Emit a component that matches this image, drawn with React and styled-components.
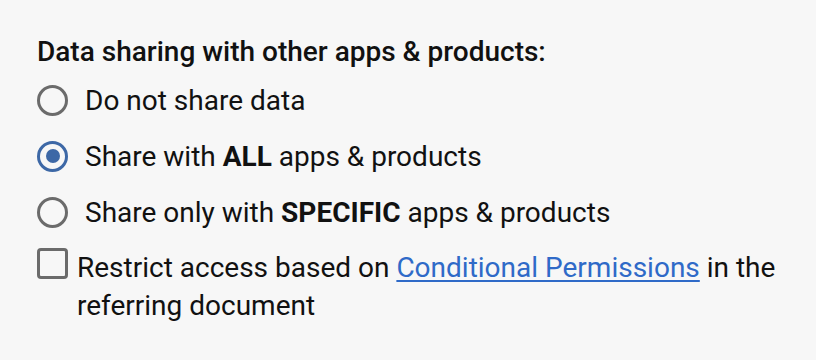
import React, { useState } from "react";
import styled, { createGlobalStyle } from "styled-components";

const GlobalStyle = createGlobalStyle`
	html, body {
		margin: 0;
		padding: 0;
		background: #f7f7f7;
	}
	body {
		font-family: Roboto, "Liberation Sans", sans-serif;
		color: #111;
	}
`;

const Panel = styled.div`
	width: 816px;
	height: 360px;
	box-sizing: border-box;
	padding: 33px 0 0 37px;
	display: flex;
	flex-direction: column;
`;

const Heading = styled.div`
	font-size: 28px;
	font-weight: 500;
	line-height: 38px;
	margin-bottom: 1px;
`;

const RadioRow = styled.label`
	display: flex;
	align-items: center;
	gap: 17px;
	height: 56px;
	font-size: 28px;
	cursor: pointer;
`;

const RadioCircle = styled.span`
	width: 31px;
	height: 31px;
	box-sizing: border-box;
	border-radius: 50%;
	border: 3.5px solid ${(p) => (p.checked ? "#3d68a6" : "#6b6b6b")};
	display: flex;
	align-items: center;
	justify-content: center;
	flex-shrink: 0;

	&::after {
		content: "";
		width: 14px;
		height: 14px;
		border-radius: 50%;
		background: #3d68a6;
		display: ${(p) => (p.checked ? "block" : "none")};
	}
`;

const CheckRow = styled.label`
	display: flex;
	align-items: flex-start;
	gap: 9px;
	margin-top: 9px;
	font-size: 28px;
	line-height: 38px;
	cursor: pointer;
`;

const CheckBox = styled.span`
	width: 31px;
	height: 31px;
	box-sizing: border-box;
	border: 3.5px solid #6b6b6b;
	border-radius: 4px;
	flex-shrink: 0;
	margin-top: -1px;
`;

const CheckText = styled.span`
	max-width: 710px;
`;

const Link = styled.a`
	color: #2f6ac8;
	text-decoration: underline;
	text-underline-offset: 3px;
`;

const options = [
	{ id: "none", label: <>Do not share data</> },
	{ id: "all", label: <>Share with <b>ALL</b> apps &amp; products</> },
	{ id: "specific", label: <>Share only with <b>SPECIFIC</b> apps &amp; products</> },
];

const App = () => {
	const [selected, setSelected] = useState("all");
	const [restrict, setRestrict] = useState(false);

	return (
		<>
			<GlobalStyle />
			<Panel>
				<Heading>Data sharing with other apps &amp; products:</Heading>
				{options.map((o) => (
					<RadioRow key={o.id} onClick={() => setSelected(o.id)}>
						<RadioCircle checked={selected === o.id} />
						<span>{o.label}</span>
					</RadioRow>
				))}
				<CheckRow onClick={() => setRestrict(!restrict)}>
					<CheckBox />
					<CheckText>
						Restrict access based on <Link href="#">Conditional Permissions</Link> in the
						referring document
					</CheckText>
				</CheckRow>
			</Panel>
		</>
	);
};

export default App;
